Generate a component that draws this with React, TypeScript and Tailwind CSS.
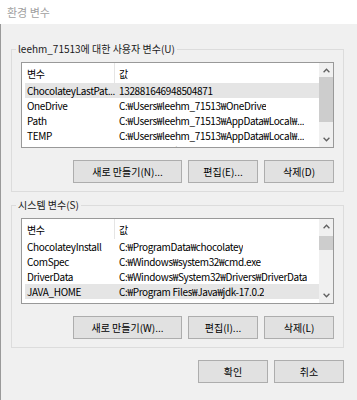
type VarRow = { name: string; value: string };

const userRows: VarRow[] = [
  { name: 'ChocolateyLastPat...', value: '132881646948504871' },
  { name: 'OneDrive', value: 'C:₩Users₩leehm_71513₩OneDrive' },
  { name: 'Path', value: 'C:₩Users₩leehm_71513₩AppData₩Local₩...' },
  { name: 'TEMP', value: 'C:₩Users₩leehm_71513₩AppData₩Local₩...' },
  { name: 'TMP', value: 'C:₩Users₩leehm_71513₩AppData₩Local₩...' },
];

const systemRows: VarRow[] = [
  { name: 'ChocolateyInstall', value: 'C:₩ProgramData₩chocolatey' },
  { name: 'ComSpec', value: 'C:₩Windows₩system32₩cmd.exe' },
  { name: 'DriverData', value: 'C:₩Windows₩System32₩Drivers₩DriverData' },
  { name: 'JAVA_HOME', value: 'C:₩Program Files₩Java₩jdk-17.0.2' },
];

function Chevron({ up }: { up?: boolean }) {
  return (
    <svg width="7" height="5" viewBox="0 0 7 5" className="block">
      <path
        d={up ? 'M0.6 4.2 L3.5 1.2 L6.4 4.2' : 'M0.6 0.8 L3.5 3.8 L6.4 0.8'}
        fill="none"
        stroke="#606060"
        strokeWidth="1.3"
      />
    </svg>
  );
}

function Scrollbar({ thumbClass }: { thumbClass: string }) {
  return (
    <div className="flex w-[14px] shrink-0 flex-col bg-[#f0f0f0]">
      <div className="flex h-[14px] items-center justify-center">
        <Chevron up />
      </div>
      <div className="flex-1">
        <div className={thumbClass} />
      </div>
      <div className="flex h-[15px] items-center justify-center">
        <Chevron />
      </div>
    </div>
  );
}

function VarList({ rows, selected, thumbClass }: { rows: VarRow[]; selected: number; thumbClass: string }) {
  return (
    <div className="flex h-[86px] border border-[#999999] bg-white">
      <div className="min-w-0 flex-1 overflow-hidden pl-[3px] tracking-[-0.35px]">
        <div className="flex h-[20px] items-center">
          <div className="flex h-full w-[90px] shrink-0 items-center border-r border-[#e5e5e5] pl-[2px]">변수</div>
          <div className="pl-[4px]">값</div>
        </div>
        {rows.map((r, i) => (
          <div
            key={r.name}
            className={i === selected ? 'flex h-[15px] items-center bg-[#e5e5e5]' : 'flex h-[15px] items-center'}
          >
            <div className="w-[90px] shrink-0 overflow-hidden whitespace-nowrap pl-[2px]">{r.name}</div>
            <div className="overflow-hidden whitespace-nowrap pl-[4px]">{r.value}</div>
          </div>
        ))}
      </div>
      <Scrollbar thumbClass={thumbClass} />
    </div>
  );
}

function Btn({ label, wide }: { label: string; wide?: boolean }) {
  return (
    <button
      className={
        wide
          ? 'flex h-[23px] w-[109px] items-center justify-center border border-[#adadad] bg-[#e1e1e1] text-black'
          : 'flex h-[23px] w-[70px] items-center justify-center border border-[#adadad] bg-[#e1e1e1] text-black'
      }
    >
      {label}
    </button>
  );
}

function Group({ title, children }: { title: string; children: React.ReactNode }) {
  return (
    <fieldset className="m-0 min-w-0 border border-[#dcdcdc] p-0">
      <legend className="ml-[4px] px-[2px] leading-[16px] text-[#1a1a1a]">{title}</legend>
      <div className="px-[9px] pb-[8px] pt-[5px]">{children}</div>
    </fieldset>
  );
}

export default function App() {
  return (
    <div className="flex h-[400px] w-[357px] flex-col overflow-hidden bg-[#f0f0f0] font-['Noto_Sans_CJK_KR',sans-serif] text-[10px] text-black">
      <div className="flex h-[24px] shrink-0 items-center bg-white pl-[7px] text-[11px] text-[#a0a0a0]">환경 변수</div>
      <div className="flex flex-1 flex-col border-l border-[#9a9a9a] pl-[10px] pr-[13px] pt-[17px]">
        <Group title="leehm_71513에 대한 사용자 변수(U)">
          <VarList rows={userRows} selected={0} thumbClass="h-[45px] bg-[#cdcdcd]" />
          <div className="mt-[12px] flex justify-end gap-[6px]">
            <Btn label="새로 만들기(N)..." wide />
            <Btn label="편집(E)..." />
            <Btn label="삭제(D)" />
          </div>
        </Group>
        <div className="mt-[5px]">
          <Group title="시스템 변수(S)">
            <VarList rows={systemRows} selected={3} thumbClass="mt-[3px] h-[14px] bg-[#cdcdcd]" />
            <div className="mt-[12px] flex justify-end gap-[6px]">
              <Btn label="새로 만들기(W)..." wide />
              <Btn label="편집(I)..." />
              <Btn label="삭제(L)" />
            </div>
          </Group>
        </div>
        <div className="mt-[12px] flex justify-end gap-[6px]">
          <Btn label="확인" />
          <Btn label="취소" />
        </div>
      </div>
    </div>
  );
}
